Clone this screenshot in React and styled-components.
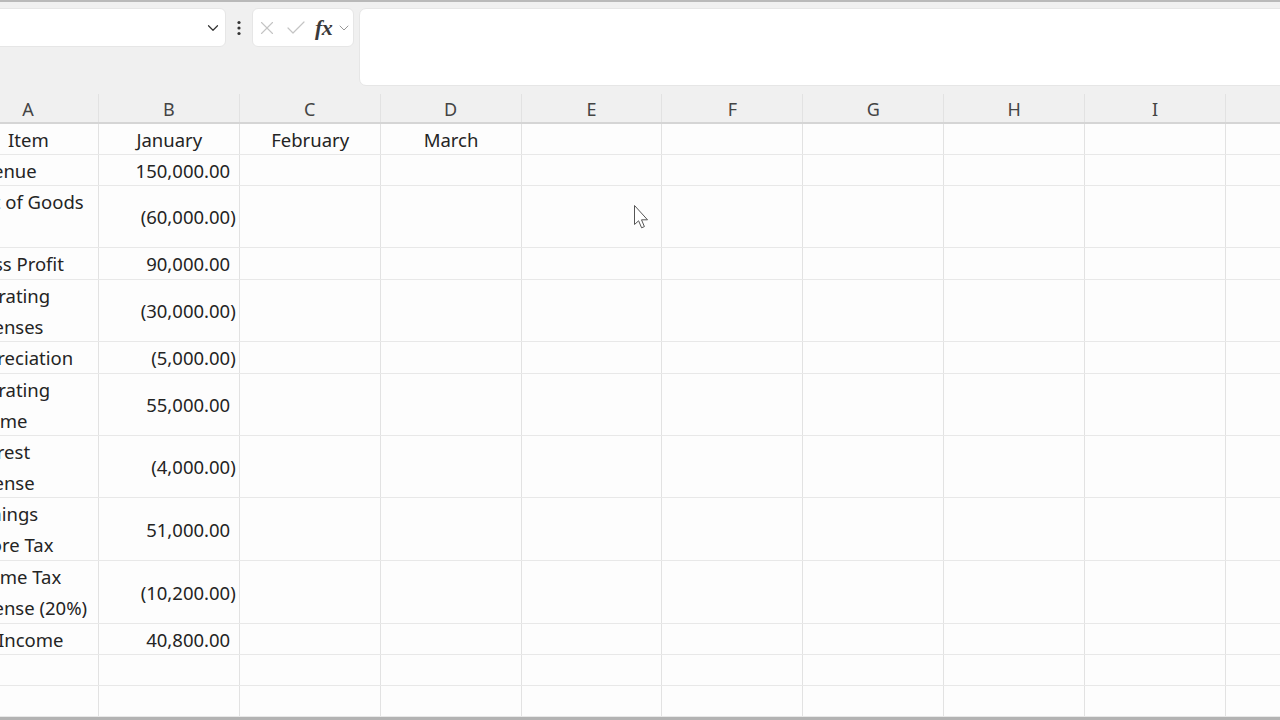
import React from "react";
import styled, { createGlobalStyle } from "styled-components";
import { X, Check, ChevronDown } from "lucide-react";

const GlobalStyle = createGlobalStyle`
  html, body { margin: 0; padding: 0; background: #f0f0f0; }
  body { font-family: "Noto Sans", "Open Sans", sans-serif; }
  * { box-sizing: border-box; }
`;

const Window = styled.div`
  position: relative;
  width: 1280px;
  height: 720px;
  overflow: hidden;
  display: flex;
  flex-direction: column;
  background: #f0f0f0;
  border-top: 2px solid #b9b9b9;
  border-bottom: 3px solid #b3b3b3;
`;

const Toolbar = styled.div`
  height: 92px;
  flex: none;
  display: flex;
  align-items: flex-start;
  padding-top: 6px;
`;

const NameBox = styled.div`
  width: 246px;
  height: 39px;
  margin-left: -20px;
  background: #fff;
  border: 1px solid #e6e6e6;
  border-radius: 6px;
  display: flex;
  align-items: center;
  justify-content: flex-end;
  padding-right: 3px;
  color: #333;
`;

const Kebab = styled.div`
  width: 26px;
  height: 39px;
  display: flex;
  align-items: center;
  justify-content: center;
`;

const FxGroup = styled.div`
  width: 102px;
  height: 39px;
  background: #fff;
  border: 1px solid #e6e6e6;
  border-radius: 6px;
  display: flex;
  align-items: center;
  padding-left: 3px;
  gap: 6px;
  color: #c4c4c4;
`;

const FxLabel = styled.span`
  font-family: "Liberation Serif", "DejaVu Serif", serif;
  font-style: italic;
  font-weight: bold;
  font-size: 22px;
  line-height: 1;
  color: #3a3a3a;
  margin-left: 1px;
  margin-right: -2px;
  letter-spacing: -0.5px;
`;

const FormulaInput = styled.div`
  flex: 1;
  height: 78px;
  margin-left: 5px;
  margin-right: -12px;
  background: #fff;
  border: 1px solid #e6e6e6;
  border-radius: 7px;
`;

const Sheet = styled.div`
  flex: 1;
  display: flex;
  flex-direction: column;
  margin-left: -42px;
  background: #fdfdfd;
`;

const HeaderRow = styled.div`
  display: grid;
  grid-template-columns: repeat(10, 140.875px);
  height: 30px;
  background: #f0f0f0;
  border-bottom: 2px solid #d5d5d5;
  flex: none;
`;

const ColHead = styled.div`
  display: flex;
  align-items: center;
  justify-content: center;
  font-size: 18px;
  color: #444;
  border-right: 1px solid #e2e2e2;
  padding-top: 1px;
`;

const Row = styled.div`
  display: grid;
  grid-template-columns: repeat(10, 140.875px);
  height: ${(p) => p.$h}px;
  flex: none;
  border-bottom: 1px solid #e8e8e8;
`;

const Cell = styled.div`
  display: flex;
  align-items: center;
  justify-content: ${(p) =>
    p.$align === "right" ? "flex-end" : p.$align === "center" ? "center" : "flex-start"};
  text-align: ${(p) => p.$align || "left"};
  padding: 0 3px 0 4px;
  font-size: 18.5px;
  line-height: 31px;
  color: #242424;
  border-right: 1px solid #e2e2e2;
  white-space: nowrap;
  overflow: hidden;
`;

const Pad = styled.span`
  visibility: hidden;
`;

const Cursor = styled.svg`
  position: absolute;
  left: 634px;
  top: 203px;
`;

const rows = [
  { h: 31, a: ["Item"], aAlign: "center", b: "January", bAlign: "center", c: "February", d: "March" },
  { h: 31, a: ["Revenue"], b: "150,000.00" },
  { h: 62, a: ["Cost of Goods", "Sold"], b: "(60,000.00)" },
  { h: 32, a: ["Gross Profit"], b: "90,000.00" },
  { h: 62, a: ["Operating", "Expenses"], b: "(30,000.00)" },
  { h: 32, a: ["Depreciation"], b: "(5,000.00)" },
  { h: 62, a: ["Operating", "Income"], b: "55,000.00" },
  { h: 62, a: ["Interest", "Expense"], b: "(4,000.00)" },
  { h: 63, a: ["Earnings", "Before Tax"], b: "51,000.00" },
  { h: 63, a: ["Income Tax", "Expense (20%)"], b: "(10,200.00)" },
  { h: 31, a: ["Net Income"], b: "40,800.00" },
  { h: 31, a: [] },
  { h: 31, a: [] },
];

const cols = ["A", "B", "C", "D", "E", "F", "G", "H", "I", "J"];

function Amount({ v }) {
  const neg = v.startsWith("(");
  return (
    <span>
      {v}
      {!neg && <Pad>)</Pad>}
    </span>
  );
}

export default function App() {
  return (
    <>
      <GlobalStyle />
      <Window>
        <Toolbar>
          <NameBox>
            <ChevronDown size={18} strokeWidth={1.6} />
          </NameBox>
          <Kebab>
            <svg width="6" height="16" viewBox="0 0 6 16">
              <circle cx="3" cy="2.5" r="1.6" fill="#333" />
              <circle cx="3" cy="8" r="1.6" fill="#333" />
              <circle cx="3" cy="13.5" r="1.6" fill="#333" />
            </svg>
          </Kebab>
          <FxGroup>
            <X size={22} strokeWidth={1.2} />
            <Check size={24} strokeWidth={1.2} />
            <FxLabel>fx</FxLabel>
            <ChevronDown size={16} strokeWidth={1.3} color="#888" />
          </FxGroup>
          <FormulaInput />
        </Toolbar>
        <Sheet>
          <HeaderRow>
            {cols.map((c) => (
              <ColHead key={c}>{c === "J" ? "" : c}</ColHead>
            ))}
          </HeaderRow>
          {rows.map((r, i) => (
            <Row key={i} $h={r.h}>
              <Cell $align={r.aAlign}>
                <span>
                  {r.a.map((t, j) => (
                    <React.Fragment key={j}>
                      {j > 0 && <br />}
                      {t}
                    </React.Fragment>
                  ))}
                </span>
              </Cell>
              <Cell $align={r.bAlign || "right"}>
                {r.b && (r.bAlign ? r.b : <Amount v={r.b} />)}
              </Cell>
              <Cell $align="center">{r.c}</Cell>
              <Cell $align="center">{r.d}</Cell>
              {cols.slice(4).map((c) => (
                <Cell key={c} />
              ))}
            </Row>
          ))}
        </Sheet>
        <Cursor width="16" height="26" viewBox="0 0 16 26">
          <path
            d="M0.5 0.5 V19.5 L4.6 15.8 L7.6 22.8 L10.4 21.6 L7.5 14.8 L13.5 14.8 Z"
            fill="#fff"
            stroke="#555"
            strokeWidth="1"
            strokeLinejoin="round"
          />
        </Cursor>
      </Window>
    </>
  );
}
